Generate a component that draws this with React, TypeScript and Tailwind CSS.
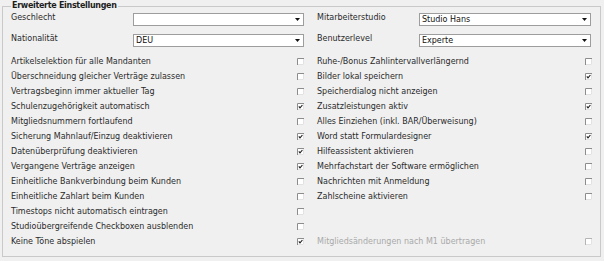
import React from "react";

type Item = { label: string; checked: boolean; disabled?: boolean } | null;

const LEFT: Item[] = [
  { label: "Artikelselektion für alle Mandanten", checked: false },
  { label: "Überschneidung gleicher Verträge zulassen", checked: false },
  { label: "Vertragsbeginn immer aktueller Tag", checked: false },
  { label: "Schulenzugehörigkeit automatisch", checked: true },
  { label: "Mitgliedsnummern fortlaufend", checked: false },
  { label: "Sicherung Mahnlauf/Einzug deaktivieren", checked: true },
  { label: "Datenüberprüfung deaktivieren", checked: true },
  { label: "Vergangene Verträge anzeigen", checked: true },
  { label: "Einheitliche Bankverbindung beim Kunden", checked: false },
  { label: "Einheitliche Zahlart beim Kunden", checked: false },
  { label: "Timestops nicht automatisch eintragen", checked: false },
  { label: "Studioübergreifende Checkboxen ausblenden", checked: false },
  { label: "Keine Töne abspielen", checked: true },
];

const RIGHT: Item[] = [
  { label: "Ruhe-/Bonus Zahlintervallverlängernd", checked: false },
  { label: "Bilder lokal speichern", checked: true },
  { label: "Speicherdialog nicht anzeigen", checked: false },
  { label: "Zusatzleistungen aktiv", checked: true },
  { label: "Alles Einziehen (inkl. BAR/Überweisung)", checked: false },
  { label: "Word statt Formulardesigner", checked: true },
  { label: "Hilfeassistent aktivieren", checked: false },
  { label: "Mehrfachstart der Software ermöglichen", checked: false },
  { label: "Nachrichten mit Anmeldung", checked: false },
  { label: "Zahlscheine aktivieren", checked: false },
  null,
  null,
  { label: "Mitgliedsänderungen nach M1 übertragen", checked: false, disabled: true },
];

function Box({ checked, disabled }: { checked: boolean; disabled?: boolean }) {
  return (
    <svg width="7" height="7" viewBox="0 0 7 7" className="shrink-0">
      <rect x="0" y="0" width="7" height="7" fill="#ffffff" />
      <path d="M0.5 7V0.5H7" fill="none" stroke={disabled ? "#b4b4b4" : "#8c8c8c"} strokeWidth="1" />
      <path d="M6.5 1V6.5H1" fill="none" stroke="#e2e2e2" strokeWidth="1" />
      {checked && (
        <path d="M1.8 3.4L3 4.8L5.4 2" fill="none" stroke="#1e1e1e" strokeWidth="1.1" />
      )}
    </svg>
  );
}

function Select({ value, width }: { value: string; width: string }) {
  return (
    <div
      className={`${width} flex h-[13px] items-center justify-between border border-[#9d9d9d] bg-white pl-[2px] pr-[3px] text-[8px] leading-none text-[#111]`}
    >
      <span>{value}</span>
      <svg width="5" height="3" viewBox="0 0 5 3">
        <path d="M0 0H5L2.5 3Z" fill="#111" />
      </svg>
    </div>
  );
}

function Row({ item }: { item: Item }) {
  if (!item) return <div className="h-[15px]" />;
  return (
    <div className="flex h-[15px] items-center justify-between">
      <span className={item.disabled ? "text-[#a9a9a9]" : "text-[#2a2a2a]"}>{item.label}</span>
      <Box checked={item.checked} disabled={item.disabled} />
    </div>
  );
}

export default function App() {
  return (
    <div
      className="h-[261px] w-[604px] bg-[#f0f0f0] text-[8px] leading-[15px]"
      style={{ fontFamily: '"DejaVu Sans", Verdana, sans-serif' }}
    >
      <fieldset className="ml-[2px] w-[598px] border border-[#c9c9c9] px-[8px] pb-[7px] pt-[1px]">
        <legend className="px-[1px] text-[8px] font-bold leading-[12px] tracking-[-0.3px] text-[#1e1e1e]">
          Erweiterte Einstellungen
        </legend>

        <div className="grid grid-cols-[293px_275px] gap-x-[13px] gap-y-[8px] text-[#2a2a2a]">
          <div className="flex h-[13px]">
            <span className="w-[122px] leading-[9px]">Geschlecht</span>
            <Select value="" width="w-[171px]" />
          </div>
          <div className="flex h-[13px]">
            <span className="w-[102px] leading-[9px]">Mitarbeiterstudio</span>
            <Select value="Studio Hans" width="w-[172px]" />
          </div>
          <div className="flex h-[13px]">
            <span className="w-[122px] leading-[9px]">Nationalität</span>
            <Select value="DEU" width="w-[171px]" />
          </div>
          <div className="flex h-[13px]">
            <span className="w-[102px] leading-[9px]">Benutzerlevel</span>
            <Select value="Experte" width="w-[172px]" />
          </div>
        </div>

        <div className="mt-[7px] grid grid-cols-[293px_275px] gap-x-[13px]">
          <div className="flex flex-col">
            {LEFT.map((it, i) => (
              <Row key={i} item={it} />
            ))}
          </div>
          <div className="flex flex-col">
            {RIGHT.map((it, i) => (
              <Row key={i} item={it} />
            ))}
          </div>
        </div>
      </fieldset>
    </div>
  );
}
